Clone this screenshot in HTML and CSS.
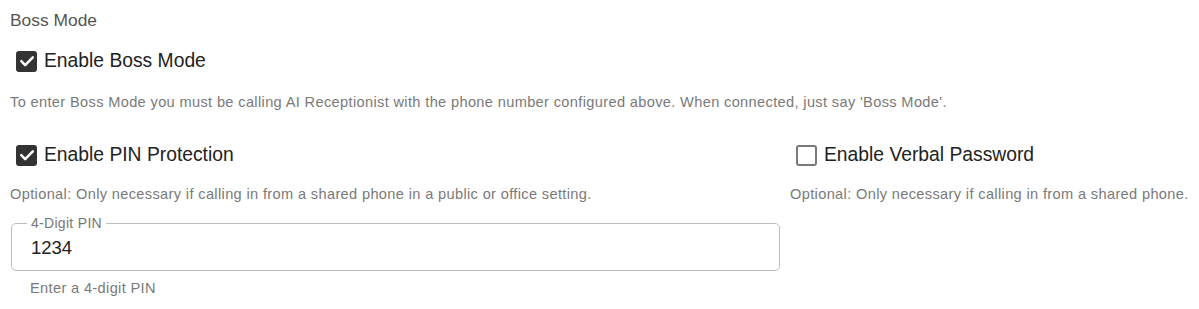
FILE: index.html
```html
<!DOCTYPE html>
<html lang="en">
<head>
<meta charset="utf-8">
<title>Boss Mode</title>
<link rel="stylesheet" href="styles.css">
</head>
<body>
<div class="section">
  <div class="title">Boss Mode</div>
  <label class="check row-boss">
    <span class="box checked">
      <svg viewBox="0 0 20 20" width="20" height="20"><path d="M4.3 10.2 L8.2 14.1 L15.8 6.3" fill="none" stroke="#fff" stroke-width="2.5" stroke-linecap="round" stroke-linejoin="round"/></svg>
    </span>
    <span class="label">Enable Boss Mode</span>
  </label>
  <p class="desc">To enter Boss Mode you must be calling AI Receptionist with the phone number configured above. When connected, just say 'Boss Mode'.</p>
  <div class="grid">
    <div class="col">
      <label class="check">
        <span class="box checked">
          <svg viewBox="0 0 20 20" width="20" height="20"><path d="M4.3 10.2 L8.2 14.1 L15.8 6.3" fill="none" stroke="#fff" stroke-width="2.5" stroke-linecap="round" stroke-linejoin="round"/></svg>
        </span>
        <span class="label">Enable PIN Protection</span>
      </label>
      <p class="desc">Optional: Only necessary if calling in from a shared phone in a public or office setting.</p>
      <fieldset class="field">
        <legend>4-Digit PIN</legend>
        <div class="value">1234</div>
      </fieldset>
      <p class="helper">Enter a 4-digit PIN</p>
    </div>
    <div class="col">
      <label class="check">
        <span class="box"></span>
        <span class="label">Enable Verbal Password</span>
      </label>
      <p class="desc">Optional: Only necessary if calling in from a shared phone.</p>
    </div>
  </div>
</div>
</body>
</html>
```
FILE: styles.css
```css
html, body {
  margin: 0;
  padding: 0;
  background: #fff;
}
body {
  font-family: "Liberation Sans", Arial, sans-serif;
  color: #222;
}
.section {
  padding: 10px 10px 0 10px;
}
.title {
  font-size: 17.4px;
  line-height: 20px;
  color: #555;
}
.check {
  display: flex;
  align-items: center;
  gap: 7px;
  height: 24px;
  padding-left: 6px;
}
.row-boss {
  margin-top: 19px;
}
.box {
  box-sizing: border-box;
  width: 21px;
  height: 21px;
  border: 2px solid #7a7a7a;
  border-radius: 3px;
  display: flex;
  align-items: center;
  justify-content: center;
  flex: none;
}
.box.checked {
  background: #333;
  border-color: #333;
}
.box svg {
  display: block;
  flex: none;
}
.label {
  font-size: 19.3px;
  color: #222;
  line-height: 24px;
}
.desc {
  margin: 21px 0 0 0;
  font-size: 14.6px;
  line-height: 16px;
  color: #7a7a7a;
  letter-spacing: 0.35px;
}
.grid {
  display: grid;
  grid-template-columns: 770px 1fr;
  column-gap: 10px;
  margin-top: 33px;
}
.col .desc {
  margin-top: 19px;
}
.field {
  margin: 15px 0 0 1px;
  padding: 0 19px 12px 19px;
  border: 1px solid #bdbdbd;
  border-radius: 5px;
  height: 54px;
  box-sizing: border-box;
}
.field legend {
  padding: 0 4px;
  margin-left: -4px;
  font-size: 14px;
  line-height: 12px;
  color: #777;
  letter-spacing: 0.3px;
}
.value {
  font-size: 18.5px;
  line-height: 24px;
  color: #222;
  margin-top: 7px;
}
.helper {
  margin: 9px 0 0 20px;
  font-size: 14.6px;
  line-height: 16px;
  color: #7a7a7a;
  letter-spacing: 0.35px;
}
```
